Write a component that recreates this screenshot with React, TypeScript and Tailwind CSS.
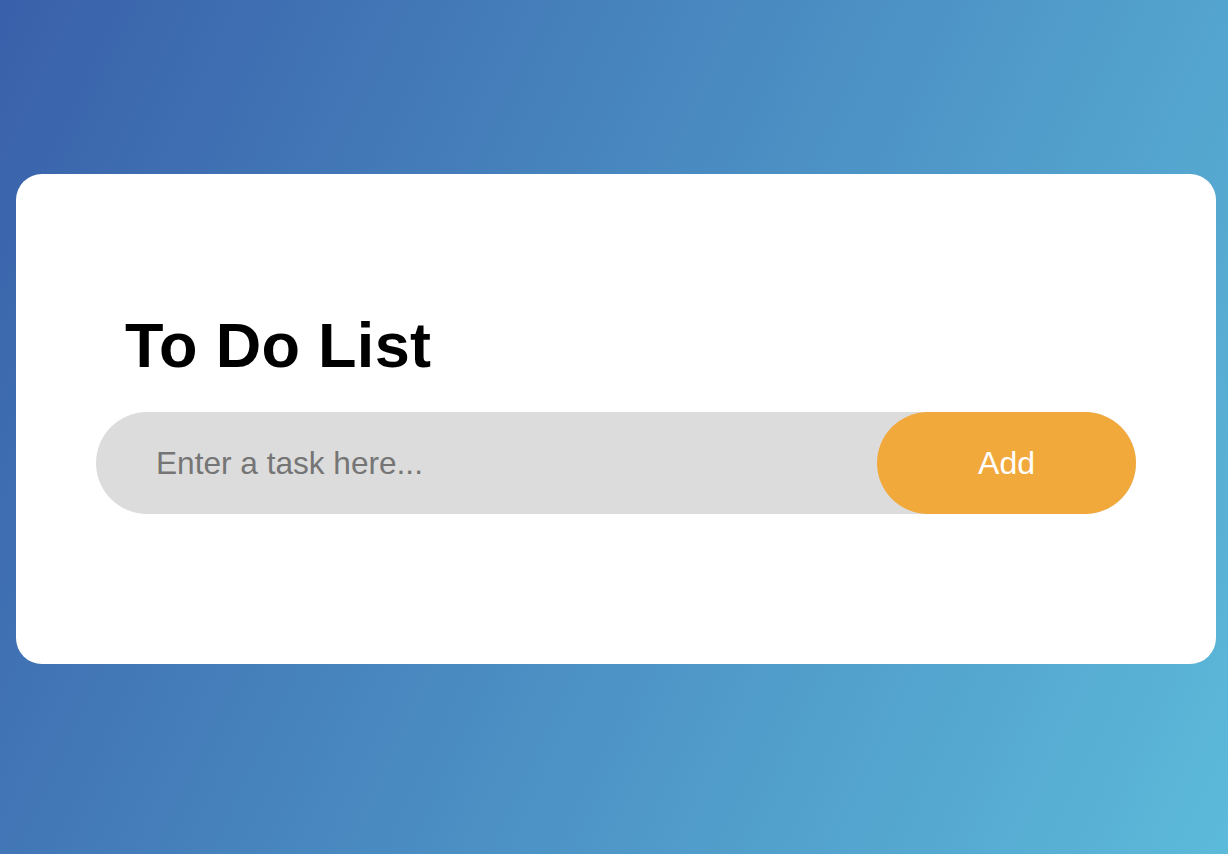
import React from "react";

export default function App() {
  return (
    <div className="min-h-[854px] w-full bg-[linear-gradient(115deg,#3960aa_0%,#5cbada_100%)] pt-[174px] pl-[16px] pr-[12px] pb-[190px] font-['Liberation_Sans',Arial,sans-serif]">
      <div className="w-[1200px] bg-white rounded-[26px] px-[80px] pt-[140px] pb-[150px]">
        <h2 className="ml-[29px] text-[63px] leading-[63px] font-bold text-black tracking-[0.3px]">To Do List</h2>
        <div className="mt-[35px] flex h-[102px] items-center rounded-full bg-[#dcdcdc]">
          <input
            type="text"
            placeholder="Enter a task here..."
            className="h-full flex-1 bg-transparent pl-[60px] text-[31.6px] text-black outline-none placeholder:text-[#757575]"
          />
          <button className="h-full w-[259px] rounded-full bg-[#f2a93b] text-[32px] text-white">Add</button>
        </div>
      </div>
    </div>
  );
}
